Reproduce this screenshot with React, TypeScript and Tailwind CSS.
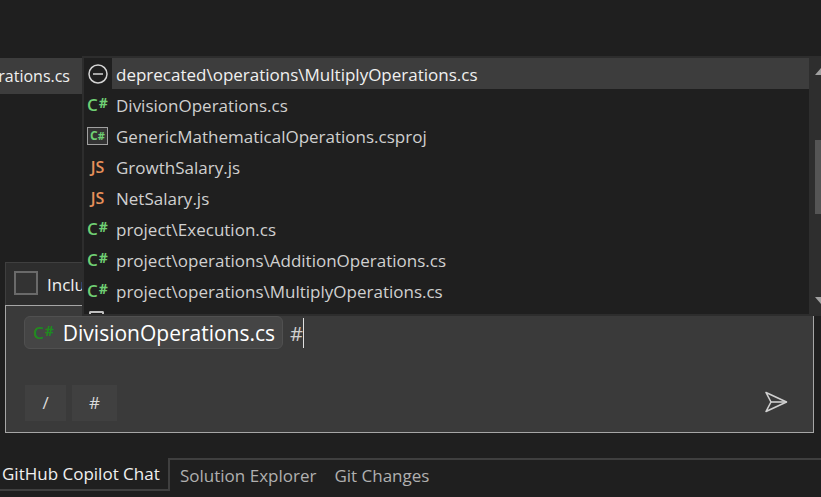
import React from 'react';

const font = { fontFamily: '"Open Sans", sans-serif' };

type Kind = 'blocked' | 'cs' | 'csproj' | 'js';

const files: { name: string; kind: Kind; selected?: boolean }[] = [
  { name: 'deprecated\\operations\\MultiplyOperations.cs', kind: 'blocked', selected: true },
  { name: 'DivisionOperations.cs', kind: 'cs' },
  { name: 'GenericMathematicalOperations.csproj', kind: 'csproj' },
  { name: 'GrowthSalary.js', kind: 'js' },
  { name: 'NetSalary.js', kind: 'js' },
  { name: 'project\\Execution.cs', kind: 'cs' },
  { name: 'project\\operations\\AdditionOperations.cs', kind: 'cs' },
  { name: 'project\\operations\\MultiplyOperations.cs', kind: 'cs' },
];

function CSharp({ color = 'text-[#6fcf74]' }: { color?: string }) {
  return (
    <span className={`flex items-center gap-[1px] font-semibold leading-none ${color}`}>
      <span className="text-[17px]">C</span>
      <span className="text-[14px] font-bold relative -top-[2px]">#</span>
    </span>
  );
}

function FileIcon({ kind }: { kind: Kind }) {
  if (kind === 'blocked') {
    return (
      <svg width="20" height="20" viewBox="0 0 20 20" fill="none" stroke="#d4d4d4" strokeWidth="1.5">
        <circle cx="10" cy="10" r="9" />
        <path d="M5 10h10" />
      </svg>
    );
  }
  if (kind === 'cs') return <CSharp />;
  if (kind === 'csproj') {
    return (
      <span className="flex items-center justify-center w-[21px] h-[18px] border border-[#a0a0a0] bg-[#333]">
        <span className="flex items-baseline font-bold leading-none text-[#6fcf74]">
          <span className="text-[12px]">C</span>
          <span className="text-[11px]">#</span>
        </span>
      </span>
    );
  }
  return <span className="text-[16px] font-semibold leading-none text-[#e8915b]">JS</span>;
}

export default function App() {
  return (
    <div className="relative flex flex-col w-[821px] h-[497px] overflow-hidden bg-[#1f1f1f] text-[#dcdcdc]" style={font}>
      {/* Editor tab, cut off at the left */}
      <div className="mt-[58px] flex justify-end items-center w-[82px] h-[36px] overflow-hidden bg-[#3d3d3d] text-[#f0f0f0] text-[16px] whitespace-nowrap pr-[12px]">
        rations.cs
      </div>

      {/* Chat panel */}
      <div className="mt-[168px] mx-[5px] w-[809px]">
        <div className="flex items-center gap-[9px] h-[43px] pl-[8px] pb-[2px] bg-[#2d2d2d] border border-b-0 border-[#3f3f3f]">
          <span className="w-[24px] h-[24px] border-2 border-[#6a6a6a] bg-[#333]" />
          <span className="pt-[4px] text-[17px] text-[#f0f0f0]">Include</span>
        </div>
        <div className="flex flex-col justify-between h-[128px] bg-[#3a3a3a] border border-[#a6a6a6] pt-[10px] pl-[18px] pr-[25px] pb-[11px]">
          <div className="flex items-center gap-[7px] h-[33px]">
            <span className="flex items-center gap-[9px] h-[33px] pl-[8px] pr-[7px] rounded-[6px] bg-[#454545] border border-[#505050]">
              <CSharp color="text-[#1f8a1f]" />
              <span className="pt-[2px] text-[21px] text-white">DivisionOperations.cs</span>
            </span>
            <span className="flex items-center text-[20px] text-[#d0d0d0]">
              <span className="pt-[2px]">#</span>
              <span className="w-px h-[30px] bg-[#e0e0e0]" />
            </span>
          </div>
          <div className="flex items-center justify-between">
            <div className="flex gap-[6px] ml-[1px]">
              <span className="flex items-center justify-center w-[41px] h-[36px] bg-[#404040] text-[17px]">/</span>
              <span className="flex items-center justify-center w-[45px] h-[36px] bg-[#404040] text-[17px]">#</span>
            </div>
            <svg className="-mt-[2px]" width="24" height="24" viewBox="0 0 24 24" fill="none" stroke="#d0d0d0" strokeWidth="1.6" strokeLinejoin="round">
              <path d="M2 2.5 22.5 12 2 21.5 7 12Z" />
              <path d="M7 12h15.5" />
            </svg>
          </div>
        </div>
      </div>

      {/* Bottom tool window tabs */}
      <div className="mt-[25px] flex h-[33px] text-[17px]">
        <div className="flex items-center w-[168px] pl-[2px] pt-[1px] border-b-2 border-[#3f3f3f] text-[#f0f0f0] whitespace-nowrap">
          GitHub Copilot Chat
        </div>
        <div className="flex flex-1 items-center gap-[18px] pl-[10px] border-t-2 border-l-2 border-[#3f3f3f] text-[#b0b0b0]">
          <span>Solution Explorer</span>
          <span>Git Changes</span>
        </div>
      </div>

      {/* File picker popup */}
      <div className="absolute left-[82px] top-[56px] flex w-[751px] h-[260px] bg-[#1f1f1f] border-t-2 border-l-2 border-[#2d2d2d] border-b-[2px]">
        <div className="flex-1 overflow-hidden">
          {files.map((file) => (
            <div key={file.name} className="flex items-center h-[31px]">
              <span className="flex items-center justify-center w-[28px] shrink-0 pr-[1px]">
                <FileIcon kind={file.kind} />
              </span>
              <span
                className={`flex flex-1 items-center h-[31px] pl-[4px] pt-[2px] text-[17px] whitespace-nowrap ${
                  file.selected ? 'bg-[#3d3d3d] text-[#f0f0f0]' : 'text-[#d0d0d0]'
                }`}
              >
                {file.name}
              </span>
            </div>
          ))}
          <div className="ml-[5px] mt-[5px] w-[15px] h-[8px] border-t-2 border-x-2 border-[#c0c0c0] rounded-t-[2px]" />
        </div>
        {/* Scrollbar, runs past the window edge */}
        <div className="flex flex-col items-center w-[24px] pt-[10px] pb-[10px] bg-[#2e2e2e]">
          <span className="w-0 h-0 border-x-[6px] border-x-transparent border-b-[7px] border-b-[#a0a0a0]" />
          <span className="w-[12px] h-[74px] mt-[65px] bg-[#555555]" />
          <span className="mt-auto w-0 h-0 border-x-[6px] border-x-transparent border-t-[7px] border-t-[#a0a0a0]" />
        </div>
      </div>
    </div>
  );
}
